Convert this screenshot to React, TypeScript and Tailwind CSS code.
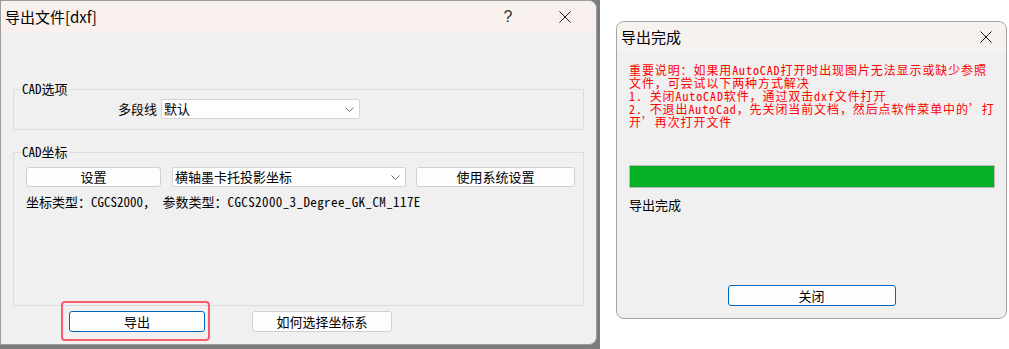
import React from "react";

// Windows-style dialogs: export DXF + export finished
const UI = "font-['Noto_Sans_CJK_SC','Microsoft_YaHei',sans-serif]";
const SONG = "font-['Noto_Sans_Mono_CJK_SC','Noto_Sans_CJK_SC',monospace]";

function CloseIcon() {
  return (
    <svg width="12" height="12" viewBox="0 0 12 12" fill="none">
      <path d="M0.5 0.5L11.5 11.5M11.5 0.5L0.5 11.5" stroke="#1a1a1a" strokeWidth="1" />
    </svg>
  );
}

function Chevron() {
  return (
    <svg width="9" height="5" viewBox="0 0 9 5" fill="none">
      <polyline points="0.5,0.5 4.5,4.5 8.5,0.5" stroke="#6a6a6a" strokeWidth="1" />
    </svg>
  );
}

function Select({ value, className }: { value: string; className: string }) {
  return (
    <div
      className={`flex h-[20px] items-center justify-between rounded-[2px] border border-[#d4d4d4] bg-white pl-[2px] pr-[5px] ${className}`}
    >
      <span className={`${SONG} text-[13px] leading-[14px] text-black`}>{value}</span>
      <Chevron />
    </div>
  );
}

function Button({
  label,
  className,
  focused = false,
}: {
  label: string;
  className: string;
  focused?: boolean;
}) {
  return (
    <div
      className={`flex items-center justify-center rounded-[3px] border bg-[#fdfdfd] ${SONG} text-[13px] leading-[14px] text-black ${
        focused ? "border-[#0067c0]" : "border-[#d0d0d0]"
      } ${className}`}
    >
      {label}
    </div>
  );
}

function ExportDialog() {
  return (
    <div className="h-[345px] w-[597px] rounded-r-[8px] border border-[#9c9c9c] bg-[#f0f0f0]">
      <div className="flex h-[31px] items-center rounded-tr-[8px] bg-[#f9f1ee]">
        <span className={`${UI} pl-[4px] text-[15px] leading-[18px] text-black`}>导出文件[dxf]</span>
        <div className="ml-auto flex h-full w-[40px] items-center justify-center">
          <span className="font-['Liberation_Sans',sans-serif] text-[16px] leading-[18px] text-[#333333]">?</span>
        </div>
        <div className="ml-[17px] mr-[11px] flex h-full w-[40px] items-center justify-center">
          <CloseIcon />
        </div>
      </div>

      <div className="px-[12px]">
        <fieldset className="mt-[50px] border border-[#dcdcdc] pb-[10px]">
          <legend className={`${SONG} ml-[7px] px-[1px] text-[13px] leading-[14px] text-black`}>CAD选项</legend>
          <div className="mt-[3px] flex items-center">
            <span className={`${SONG} ml-[104px] w-[39px] text-right text-[13px] leading-[14px] text-black`}>多段线</span>
            <Select value="默认" className="ml-[4px] w-[199px]" />
          </div>
        </fieldset>

        <fieldset className="mt-[15px] border border-[#dcdcdc] pb-[96px]">
          <legend className={`${SONG} ml-[7px] px-[1px] text-[13px] leading-[14px] text-black`}>CAD坐标</legend>
          <div className="mt-[8px] flex items-center">
            <Button label="设置" className="ml-[12px] h-[20px] w-[135px]" />
            <Select value="横轴墨卡托投影坐标" className="ml-[11px] w-[234px]" />
            <Button label="使用系统设置" className="ml-[10px] h-[20px] w-[159px]" />
          </div>
          <div className={`${SONG} mt-[8px] pl-[12px] text-[13px] leading-[14px] whitespace-pre text-black`}>
            坐标类型：CGCS2000， 参数类型：<span className="tracking-[0.4px]">CGCS2000_3_Degree_GK_CM_117E</span>
          </div>
        </fieldset>

        <div className="mt-[5px] flex items-center">
          <div className="relative ml-[56px]">
            <Button label="导出" focused className="h-[21px] w-[136px]" />
            <div className="absolute -top-[10px] -left-[8px] h-[40px] w-[149px] rounded-[4px] border-2 border-[#f65a6c]" />
          </div>
          <Button label="如何选择坐标系" className="ml-[47px] h-[21px] w-[140px]" />
        </div>
      </div>
    </div>
  );
}

function DoneDialog() {
  const lines = [
    "重要说明：如果用AutoCAD打开时出现图片无法显示或缺少参照",
    "文件，可尝试以下两种方式解决",
    "1. 关闭AutoCAD软件，通过双击dxf文件打开",
    "2. 不退出AutoCad，先关闭当前文档，然后点软件菜单中的’打",
    "开’再次打开文件",
  ];
  return (
    <div className="ml-[16px] mt-[21px] flex h-[298px] w-[391px] flex-col rounded-[8px] border border-[#a4a4a4] bg-[#f0f0f0]">
      <div className="flex h-[30px] items-center rounded-t-[8px] bg-[#f6f2f0]">
        <span className={`${UI} pl-[4px] text-[15px] leading-[18px] text-black`}>导出完成</span>
        <div className="ml-auto flex h-full w-[40px] items-center justify-center">
          <CloseIcon />
        </div>
      </div>

      <div className="flex flex-1 flex-col px-[12px]">
        <div className={`${SONG} mt-[11px] text-[12px] leading-[13px] tracking-[0.9px] text-[#ff0000]`}>
          {lines.map((l) => (
            <div key={l} className="whitespace-nowrap">
              {l}
            </div>
          ))}
        </div>

        <div className="mt-[37px] h-[23px] w-[366px] border border-[#bcbcbc] bg-[#06b025]" />

        <div className={`${UI} mt-[10px] text-[13px] leading-[14px] text-black`}>导出完成</div>

        <div className="mt-auto flex justify-center pb-[12px]">
          <Button label="关闭" focused className="h-[21px] w-[168px]" />
        </div>
      </div>
    </div>
  );
}

export default function App() {
  return (
    <div className="flex h-[349px] w-[1009px] items-start bg-white">
      <div className="h-[349px] w-[600px] bg-[#7c7c7c]">
        <ExportDialog />
      </div>
      <DoneDialog />
    </div>
  );
}
